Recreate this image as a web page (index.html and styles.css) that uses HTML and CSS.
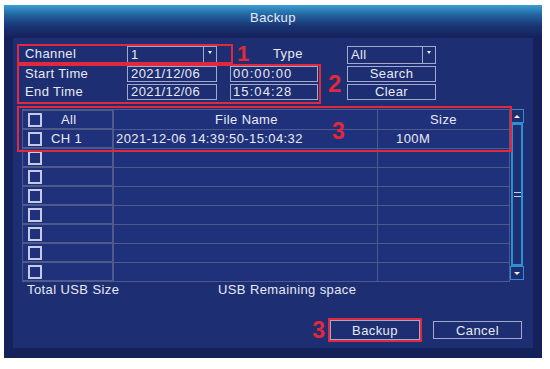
FILE: index.html
```html
<!DOCTYPE html>
<html>
<head>
    <meta charset="utf-8">
    <title>Backup</title>
    <link rel="stylesheet" href="styles.css">
</head>
<body>
    <div class="dialog">
        <div class="titlebar">Backup</div>
        <div class="panel">
            <div class="form">
                <span class="label">Channel</span>
                <div class="select c2">1<span class="arrow"></span></div>
                <span class="label type-label">Type</span>
                <div class="select c6">All<span class="arrow"></span></div>

                <span class="label">Start Time</span>
                <div class="field c2">2021/12/06</div>
                <div class="field time c4">00:00:00</div>
                <button class="btn c6">Search</button>

                <span class="label">End Time</span>
                <div class="field c2">2021/12/06</div>
                <div class="field time c4">15:04:28</div>
                <button class="btn c6">Clear</button>
            </div>

            <div class="list">
                <table class="files">
                    <colgroup>
                        <col style="width: 91px">
                        <col style="width: 264px">
                        <col>
                    </colgroup>
                    <tr class="head">
                        <td><span class="check"></span><span class="all">All</span></td>
                        <td class="center">File Name</td>
                        <td class="center">Size</td>
                    </tr>
                    <tr>
                        <td><span class="check"></span><span class="ch">CH 1</span></td>
                        <td>2021-12-06 14:39:50-15:04:32</td>
                        <td class="size">100M</td>
                    </tr>
                    <tr><td><span class="check"></span></td><td></td><td></td></tr>
                    <tr><td><span class="check"></span></td><td></td><td></td></tr>
                    <tr><td><span class="check"></span></td><td></td><td></td></tr>
                    <tr><td><span class="check"></span></td><td></td><td></td></tr>
                    <tr><td><span class="check"></span></td><td></td><td></td></tr>
                    <tr><td><span class="check"></span></td><td></td><td></td></tr>
                    <tr><td><span class="check"></span></td><td></td><td></td></tr>
                </table>
                <div class="scrollbar">
                    <div class="sb-btn"><span class="tri up"></span></div>
                    <div class="sb-track"><span class="grip"></span></div>
                    <div class="sb-btn"><span class="tri down"></span></div>
                </div>
            </div>

            <div class="usb">
                <span class="usb-total">Total USB Size</span>
                <span>USB Remaining space</span>
            </div>

            <div class="actions">
                <span class="mark">3</span>
                <button class="btn big marked">Backup</button>
                <button class="btn big cancel">Cancel</button>
            </div>

            <div class="box box1"></div>
            <div class="box box2"></div>
            <div class="box box3"></div>
            <span class="mark num1">1</span>
            <span class="mark num2">2</span>
            <span class="mark num3">3</span>
        </div>
    </div>
</body>
</html>
```

FILE: styles.css
```css
:root {
    --frame: #15215a;
    --panel: #1e2e72;
    --cell: #20317b;
    --line: #4e5a8c;
    --edge: #a3a9cb;
    --text: #e8eaf4;
    --red: #e2283c;
    --cyan: #2f8fd0;
}

* {
    box-sizing: border-box;
}

body {
    margin: 0;
    padding: 5px 0 0 4px;
    background: #fff;
    font-family: "Liberation Sans", Arial, sans-serif;
    font-size: 13px;
    letter-spacing: 0.4px;
    color: var(--text);
}

.dialog {
    width: 538px;
    height: 353px;
    background: var(--frame);
    display: flex;
    flex-direction: column;
}

.titlebar {
    height: 33px;
    line-height: 26px;
    text-align: center;
    background: linear-gradient(to bottom, #3a9ed6 0%, #22649f 30%, #1a3676 62%, var(--frame) 100%);
}

.panel {
    position: relative;
    flex: 1;
    margin: 0 9px 10px;
    background: var(--panel);
}

/* search form */
.form {
    display: grid;
    grid-template-columns: 110px 90px 13px 88px 29px 89px;
    grid-template-rows: 18px 16px 16px;
    row-gap: 2px;
    padding: 8px 0 0 4px;
}

.label {
    grid-column: 1;
    align-self: start;
    line-height: 15px;
    padding-left: 8px;
}

.type-label {
    grid-column: 4;
    padding-left: 43px;
}

.c2 { grid-column: 2; }
.c4 { grid-column: 4; }
.c6 { grid-column: 6; }

.field, .select {
    position: relative;
    border: 1px solid var(--edge);
    padding-left: 3px;
    line-height: 14px;
}

.select {
    line-height: 16px;
}

.time {
    padding-left: 2px;
    letter-spacing: 1.1px;
}

.arrow {
    position: absolute;
    top: 0;
    right: 0;
    width: 13px;
    height: 100%;
    border-left: 1px solid var(--edge);
}

.arrow::after {
    content: "";
    position: absolute;
    left: 4px;
    top: 4px;
    border-left: 2px solid transparent;
    border-right: 2px solid transparent;
    border-top: 3px solid #f0f0f8;
}

.btn {
    background: transparent;
    border: 1px solid var(--edge);
    color: var(--text);
    font: inherit;
    letter-spacing: 0.4px;
    padding: 0;
    line-height: 14px;
}

/* file list */
.list {
    display: flex;
    margin: 9px 0 0 9px;
    height: 171px;
}

.files {
    width: 488px;
    table-layout: fixed;
    border-collapse: collapse;
    background: var(--cell);
    border: 1px solid var(--line);
}

.files td {
    height: 19px;
    padding: 0;
    border: 1px solid var(--line);
    white-space: nowrap;
    line-height: 15px;
}

.files td:first-child {
    display: flex;
    align-items: center;
    border-left: none;
}

.files td:nth-child(2) {
    padding-left: 2px;
}

.check {
    display: inline-block;
    width: 14px;
    height: 14px;
    margin-left: 5px;
    border: 2px solid #c6cae6;
}

.all {
    margin-left: 19px;
}

.ch {
    margin-left: 9px;
}

.center {
    text-align: center;
}

.files td.size {
    padding-left: 18px;
}

.scrollbar {
    width: 14px;
    display: flex;
    flex-direction: column;
}

.sb-btn {
    height: 14px;
    border: 1px solid var(--cyan);
    display: flex;
    justify-content: center;
    align-items: center;
}

.tri {
    border-left: 3px solid transparent;
    border-right: 3px solid transparent;
}

.tri.up {
    border-bottom: 3px solid #f0f0f8;
}

.tri.down {
    border-top: 3px solid #f0f0f8;
}

.sb-track {
    flex: 1;
    margin: 0 1px;
    border: 2px solid var(--cyan);
    display: flex;
    justify-content: center;
    align-items: center;
}

.grip {
    width: 7px;
    height: 5px;
    border-top: 1px solid #b8d4ee;
    border-bottom: 1px solid #b8d4ee;
}

/* usb info and actions */
.usb {
    display: flex;
    margin-top: 2px;
    padding-left: 14px;
    line-height: 16px;
}

.usb-total {
    width: 191px;
}

.actions {
    display: flex;
    justify-content: flex-end;
    align-items: center;
    gap: 13px;
    margin-top: 22px;
    padding-right: 11px;
}

.big {
    width: 90px;
    height: 19px;
    line-height: 17px;
}

.marked {
    height: 20px;
    outline: 2px solid var(--red);
    margin-left: -8px;
}

.cancel {
    width: 89px;
    height: 18px;
}

/* red annotations */
.mark {
    color: var(--red);
    font-weight: bold;
    font-size: 23px;
    line-height: 18px;
    letter-spacing: 0;
}

.box {
    position: absolute;
    left: 4px;
    border: 2px solid var(--red);
}

.box1 { top: 6px; width: 216px; height: 20px; }
.box2 { top: 26px; width: 304px; height: 40px; }
.box3 { top: 68px; width: 495px; height: 46px; }

.num1 { position: absolute; left: 224px; top: 7px; font-size: 22px; }
.num2 { position: absolute; left: 315px; top: 37px; font-size: 24px; }
.num3 { position: absolute; left: 319px; top: 84px; }
```
